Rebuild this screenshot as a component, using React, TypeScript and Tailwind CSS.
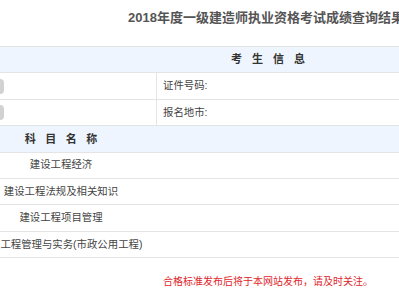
import React from 'react';

const font = { fontFamily: '"Liberation Sans", "Noto Sans CJK SC", sans-serif' };

const subjects = [
  '建设工程经济',
  '建设工程法规及相关知识',
  '建设工程项目管理',
  '专业工程管理与实务(市政公用工程)',
];

const Spaced: React.FC<{ text: string; gap: string }> = ({ text, gap }) => (
  <div className={`flex ${gap}`}>
    {text.split('').map((c, i) => (
      <span key={i}>{c}</span>
    ))}
  </div>
);

const InfoRow: React.FC<{ label: string }> = ({ label }) => (
  <div className="flex h-[26.375px] border-b border-[#e4e4e4]">
    <div className="w-[257px] border-r border-[#e4e4e4] flex items-center">
      <div className="ml-[84px] w-[20px] h-[15px] bg-[#d2d2d2] rounded-sm" />
    </div>
    <div className="flex items-center pl-[6px] text-[10.4px] text-[#444]">{label}</div>
  </div>
);

export default function App() {
  return (
    <div className="w-[399px] h-[300px] overflow-hidden bg-white" style={font}>
      <div className="h-[46px] pt-[9px] pl-[128px] whitespace-nowrap text-[13px] leading-[18px] font-bold text-[#555]">
        2018年度一级建造师执业资格考试成绩查询结果
      </div>

      <div className="ml-[-100px] w-[736px] border-t border-[#e4e4e4]">
        <div className="h-[26.375px] border-b border-[#e4e4e4] bg-[#eef5fe] flex items-center justify-center text-[11px] font-bold text-[#333]">
          <Spaced text="考生信息" gap="gap-[10px]" />
        </div>
        <InfoRow label="证件号码:" />
        <InfoRow label="报名地市:" />
        <div className="h-[26.375px] border-b border-[#e4e4e4] bg-[#eef5fe] flex items-center text-[11px] font-bold text-[#333]">
          <div className="w-[322px] flex justify-center">
            <Spaced text="科目名称" gap="gap-[9.5px]" />
          </div>
        </div>
        {subjects.map((s) => (
          <div key={s} className="h-[26.375px] border-b border-[#e4e4e4] flex items-center text-[10.4px] text-[#444]">
            <div className="w-[322px] text-center whitespace-nowrap">{s}</div>
          </div>
        ))}
        <div className="pt-[17px] text-center text-[10px] leading-[14px] text-[#e0262b]">
          合格标准发布后将于本网站发布，请及时关注。
        </div>
      </div>
    </div>
  );
}
